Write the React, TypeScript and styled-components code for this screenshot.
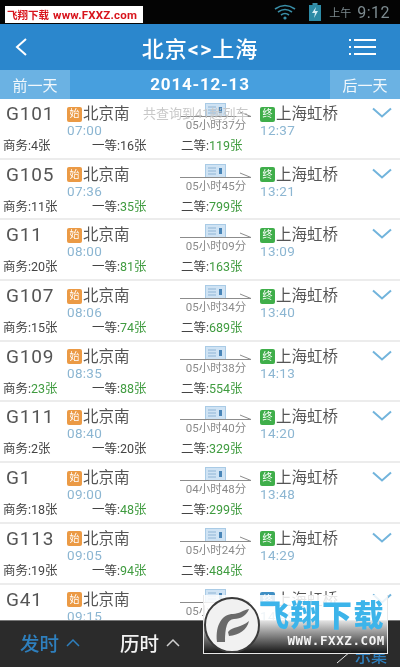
import React from "react";
import styled, { createGlobalStyle } from "styled-components";

interface Train {
  code: string;
  depart: string;
  arrive: string;
  duration: string;
  biz: string;
  first: string;
  second: string;
  endBlue?: boolean;
}

const trains: Train[] = [
  { code: "G101", depart: "07:00", arrive: "12:37", duration: "05小时37分", biz: "4张", first: "16张", second: "119张" },
  { code: "G105", depart: "07:36", arrive: "13:21", duration: "05小时45分", biz: "11张", first: "35张", second: "799张" },
  { code: "G11", depart: "08:00", arrive: "13:09", duration: "05小时09分", biz: "20张", first: "81张", second: "163张" },
  { code: "G107", depart: "08:06", arrive: "13:40", duration: "05小时34分", biz: "15张", first: "74张", second: "689张" },
  { code: "G109", depart: "08:35", arrive: "14:13", duration: "05小时38分", biz: "23张", first: "88张", second: "554张" },
  { code: "G111", depart: "08:40", arrive: "14:20", duration: "05小时40分", biz: "2张", first: "20张", second: "329张" },
  { code: "G1", depart: "09:00", arrive: "13:48", duration: "04小时48分", biz: "18张", first: "48张", second: "299张" },
  { code: "G113", depart: "09:05", arrive: "14:29", duration: "05小时24分", biz: "19张", first: "94张", second: "484张" },
  { code: "G41", depart: "09:15", arrive: "14:49", duration: "05小时34分", biz: "9张", first: "52张", second: "310张", endBlue: true },
];

// 余票多于 20 张才显示绿色
const isPlenty = (value: string) => parseInt(value, 10) >= 21;

const GlobalStyle = createGlobalStyle`
  html, body {
    margin: 0;
    padding: 0;
    background: #fff;
  }
  body {
    font-family: "Roboto", "Noto Sans CJK SC", sans-serif;
  }
`;

const Screen = styled.div`
  position: relative;
  display: flex;
  flex-direction: column;
  width: 400px;
  height: 667px;
  overflow: hidden;
  filter: blur(0.35px);
`;

const StatusBar = styled.div`
  display: flex;
  flex: 0 0 24px;
  align-items: center;
  justify-content: space-between;
  padding: 0 10px 0 5px;
  background: #040404;
`;

const Ad = styled.div`
  display: flex;
  align-items: center;
  gap: 4px;
  width: 138px;
  height: 17px;
  margin-top: 5px;
  padding-left: 2px;
  box-sizing: border-box;
  background: #fff;
  color: #d8141c;
  font-size: 10.5px;
  font-weight: 700;
  white-space: nowrap;
`;

const AdUrl = styled.span`
  font-size: 11.5px;
  letter-spacing: 0.2px;
`;

const Status = styled.div`
  display: flex;
  align-items: center;
  gap: 13px;
  color: #7d8b90;
`;

const AmPm = styled.span`
  margin-left: -5px;
  font-size: 11px;
`;

const Clock = styled.span`
  margin-left: -7px;
  font-size: 16px;
  letter-spacing: 0.5px;
`;

const Header = styled.div`
  display: grid;
  flex: 0 0 46px;
  grid-template-columns: 1fr auto 1fr;
  align-items: center;
  padding: 0 24px;
  background: #2b87cd;
  color: #fff;
`;

const BackButton = styled.div`
  display: flex;
  margin-left: -10px;
`;

const MenuButton = styled.div`
  display: flex;
  justify-self: end;
`;

const Title = styled.div`
  font-size: 22px;
  font-weight: 500;
  letter-spacing: 1px;
`;

const DateBar = styled.div`
  display: flex;
  flex: 0 0 29px;
  background: #479fde;
  color: #fff;
`;

const DayButton = styled.div`
  display: flex;
  align-items: center;
  justify-content: center;
  width: 70px;
  background: #6bb2e3;
  color: #f2f8fc;
  font-size: 15px;
`;

const DateText = styled.div`
  flex: 1;
  padding-bottom: 1px;
  font-size: 17px;
  font-weight: 700;
  line-height: 28px;
  text-align: center;
  letter-spacing: 0.8px;
`;

const List = styled.div`
  flex: 1;
  min-height: 0;
  overflow: hidden;
`;

const Row = styled.div`
  display: flex;
  flex-direction: column;
  box-sizing: border-box;
  height: 60.7px;
  padding: 1px 0 0 3px;
  border-bottom: 2px solid #ececec;
  background: #fff;
`;

const Main = styled.div`
  display: grid;
  grid-template-columns: 64px 108px 82px 1fr 30px;
  height: 38px;
`;

const Code = styled.div`
  padding: 2px 0 0 3px;
  color: #555;
  font-size: 19px;
  line-height: 24px;
  letter-spacing: 0.8px;
`;

const Stop = styled.div`
  display: flex;
  flex-direction: column;
  padding-top: 3px;
`;

const StopName = styled.div`
  display: flex;
  align-items: center;
  gap: 1px;
  color: #555;
  font-size: 15.5px;
  line-height: 22px;
`;

const Badge = styled.span<{ $color: string }>`
  display: inline-flex;
  align-items: center;
  justify-content: center;
  width: 15px;
  height: 15px;
  border-radius: 2px;
  background: ${(p) => p.$color};
  color: #fff;
  font-size: 10px;
`;

const Time = styled.div`
  margin-top: -3px;
  color: #8cb6d2;
  font-size: 13.5px;
  line-height: 16px;
  letter-spacing: 0.3px;
`;

const Route = styled.div`
  display: flex;
  flex-direction: column;
  align-items: center;
  padding-top: 3px;
`;

const Duration = styled.div`
  color: #8a8a8a;
  font-size: 11.5px;
  line-height: 13px;
  white-space: nowrap;
`;

const Arrival = styled.div`
  padding-left: 3px;
`;

const Chevron = styled.div`
  padding: 4px 0 0 2px;
`;

const Seats = styled.div`
  display: grid;
  grid-template-columns: 89px 89px 1fr;
  color: #444;
  font-size: 12.5px;
  line-height: 16px;
`;

const Count = styled.span<{ $plenty: boolean }>`
  color: ${(p) => (p.$plenty ? "#3f9b3f" : "#444")};
`;

const Toast = styled.div`
  position: absolute;
  top: 105px;
  left: 143px;
  color: #c8c8c8;
  font-size: 13px;
  line-height: 18px;
  white-space: nowrap;
`;

const BottomBar = styled.div`
  display: flex;
  flex: 0 0 47px;
  align-items: center;
  gap: 40px;
  padding: 0 0 4px 20px;
  box-sizing: border-box;
  border-top: 1px solid #777;
  background: #2b2b2b;
  font-size: 19.5px;
  font-weight: 500;
`;

const Sort = styled.div<{ $active?: boolean }>`
  display: flex;
  align-items: center;
  gap: 7px;
  color: ${(p) => (p.$active ? "#2e7fbd" : "#f2f2f2")};
`;

const Filter = styled.div`
  position: absolute;
  right: 13px;
  bottom: 1px;
  display: flex;
  align-items: center;
  gap: 3px;
  color: #2e7fbd;
  font-size: 16px;
  font-weight: 500;
  line-height: 18px;
`;

const Watermark = styled.div`
  position: absolute;
  top: 595px;
  left: 203px;
  display: flex;
  flex-direction: column;
  align-items: flex-end;
  width: 185px;
  height: 59px;
  box-sizing: border-box;
  padding: 4px 2px 0 0;
  border: 1px solid #e8e8e8;
  border-top: none;
  background: linear-gradient(180deg, rgba(255, 255, 255, 0.85) 0%, rgba(255, 255, 255, 0.85) 45%, rgba(20, 20, 20, 0.95) 100%);
`;

const WatermarkLogo = styled.div`
  position: absolute;
  top: 2px;
  left: 0;
  display: flex;
  align-items: center;
  justify-content: center;
  width: 56px;
  height: 56px;
  box-sizing: border-box;
  border: 2px solid #3a3a3a;
  border-radius: 50%;
  background: #f1f1f1;
`;

const WatermarkTitle = styled.div`
  color: #3cb4ea;
  font-size: 30px;
  font-weight: 900;
  line-height: 34px;
  letter-spacing: 1.5px;
  white-space: nowrap;
`;

const WatermarkUrl = styled.div`
  margin-top: 1px;
  color: #f4f4f4;
  font-family: "DejaVu Sans Mono", monospace;
  font-size: 12.5px;
  font-weight: 700;
  line-height: 14px;
  letter-spacing: 0.6px;
`;

const BackIcon = () => (
  <svg width="14" height="20" viewBox="0 0 14 20">
    <path d="M12 2 L3 10 L12 18" fill="none" stroke="#fff" strokeWidth="2" />
  </svg>
);

const MenuIcon = () => (
  <svg width="27" height="20" viewBox="0 0 27 20">
    <g fill="#fff">
      <rect x="0" y="2" width="2" height="2" />
      <rect x="5" y="2" width="22" height="2" />
      <rect x="0" y="9" width="2" height="2" />
      <rect x="5" y="9" width="22" height="2" />
      <rect x="0" y="16" width="2" height="2" />
      <rect x="5" y="16" width="22" height="2" />
    </g>
  </svg>
);

const WifiIcon = () => (
  <svg width="22" height="16" viewBox="0 0 22 16">
    <g fill="none" stroke="#3a8fa8" strokeWidth="1.6">
      <path d="M1 5 Q11 -2 21 5" />
      <path d="M4 8 Q11 3 18 8" />
      <path d="M7 11 Q11 8 15 11" />
    </g>
    <circle cx="11" cy="14" r="1.6" fill="#3a8fa8" />
  </svg>
);

const BatteryIcon = () => (
  <svg width="12" height="18" viewBox="0 0 12 18">
    <rect x="3.5" y="0" width="5" height="2" fill="#3a8fa8" />
    <rect x="0" y="2" width="12" height="16" fill="#2d8ba6" />
    <path d="M7 4 L3 10 L6 10 L5 15 L9 8 L6 8 Z" fill="#d7eef5" />
  </svg>
);

const TrainArrow = () => (
  <svg width="72" height="16" viewBox="0 0 72 16">
    <rect x="25.5" y="0.5" width="20" height="13" fill="#cfe3f4" stroke="#a9cbe6" />
    <g stroke="#8fb4d4">
      <line x1="28" y1="4" x2="36" y2="4" />
      <line x1="28" y1="7" x2="36" y2="7" />
      <line x1="28" y1="10" x2="36" y2="10" />
    </g>
    <rect x="39" y="4" width="3" height="6" fill="#4a86b8" />
    <path d="M0 13.5 H71 L60 9" fill="none" stroke="#8c8c8c" strokeWidth="1" />
  </svg>
);

const ExpandIcon = () => (
  <svg width="20" height="12" viewBox="0 0 20 12">
    <path d="M1 1.5 L10 9.5 L19 1.5" fill="none" stroke="#72b4dc" strokeWidth="2" />
  </svg>
);

const SortIcon = ({ color }: { color: string }) => (
  <svg width="14" height="9" viewBox="0 0 14 9">
    <path d="M1 8 L7 2 L13 8" fill="none" stroke={color} strokeWidth="1.5" />
  </svg>
);

const SlashIcon = () => (
  <svg width="16" height="14" viewBox="0 0 16 14">
    <line x1="1" y1="13" x2="15" y2="1" stroke="#e6e6e6" strokeWidth="1" />
  </svg>
);

const SwirlLogo = () => (
  <svg width="46" height="46" viewBox="0 0 46 46">
    <path d="M8 40 C6 22 14 12 24 12 C30 12 34 8 40 7 C38 13 32 17 25 17 C18 17 16 26 16 40 Z" fill="#6a6a6a" />
    <path d="M19 30 C24 24 32 26 40 19 C38 28 30 33 20 34 Z" fill="#6a6a6a" />
  </svg>
);

const App: React.FC = () => {
  return (
    <Screen>
      <GlobalStyle />
      <StatusBar>
        <Ad>
          <span>飞翔下载</span>
          <AdUrl>www.FXXZ.com</AdUrl>
        </Ad>
        <Status>
          <WifiIcon />
          <BatteryIcon />
          <AmPm>上午</AmPm>
          <Clock>9:12</Clock>
        </Status>
      </StatusBar>
      <Header>
        <BackButton>
          <BackIcon />
        </BackButton>
        <Title>北京&lt;&gt;上海</Title>
        <MenuButton>
          <MenuIcon />
        </MenuButton>
      </Header>
      <DateBar>
        <DayButton>前一天</DayButton>
        <DateText>2014-12-13</DateText>
        <DayButton>后一天</DayButton>
      </DateBar>
      <List>
        {trains.map((train) => (
          <Row key={train.code}>
            <Main>
              <Code>{train.code}</Code>
              <Stop>
                <StopName>
                  <Badge $color="#eb9a45">始</Badge>
                  北京南
                </StopName>
                <Time>{train.depart}</Time>
              </Stop>
              <Route>
                <TrainArrow />
                <Duration>{train.duration}</Duration>
              </Route>
              <Arrival>
                <Stop>
                  <StopName>
                    <Badge $color={train.endBlue ? "#3f8fc4" : "#3fae4a"}>终</Badge>
                    上海虹桥
                  </StopName>
                  <Time>{train.arrive}</Time>
                </Stop>
              </Arrival>
              <Chevron>
                <ExpandIcon />
              </Chevron>
            </Main>
            <Seats>
              <span>
                商务:<Count $plenty={isPlenty(train.biz)}>{train.biz}</Count>
              </span>
              <span>
                一等:<Count $plenty={isPlenty(train.first)}>{train.first}</Count>
              </span>
              <span>
                二等:<Count $plenty={isPlenty(train.second)}>{train.second}</Count>
              </span>
            </Seats>
          </Row>
        ))}
      </List>
      <Toast>共查询到41趟列车</Toast>
      <BottomBar>
        <Sort $active>
          发时
          <SortIcon color="#2e7fbd" />
        </Sort>
        <Sort>
          历时
          <SortIcon color="#cfcfcf" />
        </Sort>
      </BottomBar>
      <Filter>
        <SlashIcon />
        示集
      </Filter>
      <Watermark>
        <WatermarkLogo>
          <SwirlLogo />
        </WatermarkLogo>
        <WatermarkTitle>飞翔下载</WatermarkTitle>
        <WatermarkUrl>WWW.FXXZ.COM</WatermarkUrl>
      </Watermark>
    </Screen>
  );
};

export default App;
